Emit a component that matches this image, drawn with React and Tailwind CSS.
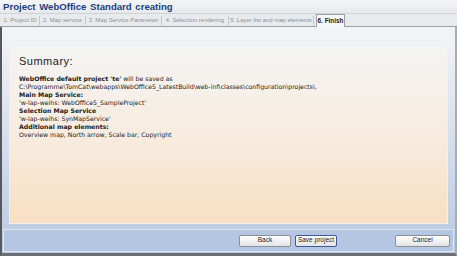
const tabs = [
  ["1. Project ID", "w-[38px]"],
  ["2. Map service", "w-[45px]"],
  ["3. Map Service Parameter", "w-[75px]"],
  ["4. Selection rendering", "w-[66px]"],
  ["5. Layer list and map elements", "w-[84px]"],
];

const Btn = ({ children, w, focus }) => (
  <button
    className={
      "h-[12px] p-0 whitespace-nowrap rounded-[2px] border bg-gradient-to-b from-white to-[#e4e4e4] text-[6.5px] leading-none text-[#222] font-['Liberation_Sans',sans-serif] " +
      (focus ? "border-[#3a5a9a] " : "border-[#8a8f98] ") +
      w
    }
  >
    {children}
  </button>
);

export default function App() {
  return (
    <div className="w-[457px] h-[256px] overflow-hidden flex flex-col bg-[#c9cdd3] font-['DejaVu_Sans',sans-serif]">
      <div className="h-[14px] shrink-0 bg-gradient-to-b from-[#f4f5f7] to-[#e6e9ed] border-b border-[#cfd3d8] pl-[3px] flex items-center">
        <span className="text-[9.6px] font-bold text-[#1e3f7c] [word-spacing:1px] leading-none font-['Liberation_Sans',sans-serif]">
          Project WebOffice Standard creating
        </span>
      </div>
      <div className="h-[13px] shrink-0 bg-[#e8ebee] flex items-end border-b border-[#9aa0a8]">
        <div className="flex items-center h-[12px] pl-[1px]">
          {tabs.map(([t, w]) => (
            <div key={t} className="flex items-center h-full">
              <span className={"text-center text-[6px] text-[#8c9096] leading-none whitespace-nowrap font-['Liberation_Sans',sans-serif] " + w}>{t}</span>
              <span className="w-px h-[9px] bg-[#c3c7cc]" />
            </div>
          ))}
        </div>
        <div className="ml-[2px] h-[13px] w-[29px] mb-[-1px] bg-[#f7f8f9] border border-b-0 border-[#9aa0a8] flex items-center justify-center">
          <span className="text-[6.4px] text-[#222] font-bold leading-none whitespace-nowrap font-['Liberation_Sans',sans-serif]">6. Finish</span>
        </div>
      </div>
      <div className="flex-1 flex flex-col border-l-[2px] border-l-[#55595e] border-r-[2px] border-r-[#a8adb4] border-b-[3px] border-b-[#6a6e74] bg-gradient-to-b from-[#f3f4f6] to-[#b9c9e2]">
        <div className="flex-1 pt-[18px] px-[7px] pb-[5px] flex">
          <div className="flex-1 bg-gradient-to-b from-[#f4f4f4] via-[#f7ecdf] to-[#f8dfc2] border border-[#eef0f3] pl-[9px] pt-[10px]">
            <div className="text-[11px] text-[#222] leading-none mb-[8px] tracking-[0.5px] font-['Liberation_Sans',sans-serif]">Summary:</div>
            <div className="text-[6.2px] leading-[8px] text-[#222]">
              <div><b>WebOffice default project 'te'</b> will be saved as</div>
              <div>C:\Programme\TomCat\webapps\WebOffice5_LatestBuild\web-inf\classes\configuration\projects\.</div>
              <div className="font-bold">Main Map Service:</div>
              <div>'w-lap-weihs: WebOffice5_SampleProject'</div>
              <div className="font-bold">Selection Map Service</div>
              <div>'w-lap-weihs: SynMapService'</div>
              <div className="font-bold">Additional map elements:</div>
              <div>Overview map, North arrow, Scale bar, Copyright</div>
            </div>
          </div>
        </div>
        <div className="h-[23px] mx-[1px] mb-[1px] shrink-0 border border-[#dfe6f1] bg-[#b4c6e1] flex items-center pl-[235px] pr-[3px]">
          <Btn w="w-[52px]">Back</Btn>
          <div className="w-[4px]" />
          <Btn w="w-[42px]" focus>Save project</Btn>
          <div className="flex-1" />
          <Btn w="w-[55px]">Cancel</Btn>
        </div>
      </div>
    </div>
  );
}
